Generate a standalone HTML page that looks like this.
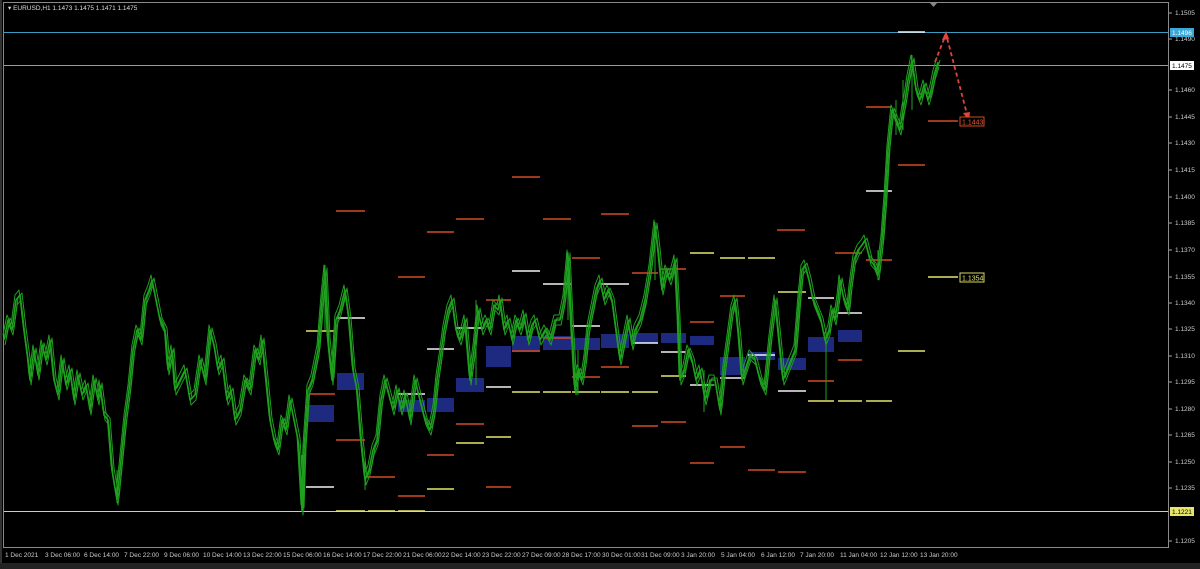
<!DOCTYPE html>
<html><head><meta charset="utf-8"><style>
html,body{margin:0;padding:0;background:#000;width:1200px;height:569px;overflow:hidden}
svg{display:block}
text{font-family:"Liberation Sans",sans-serif}
</style></head><body>
<svg width="1200" height="569" viewBox="0 0 1200 569" xmlns="http://www.w3.org/2000/svg">
<defs>
<polyline id="pl" fill="none" stroke-linejoin="round" points="
4,340 8,320 12,330 16,300 20,295 24,330 28,360 30,380 34,350 38,375 42,345 46,360 50,340 54,380 58,395 62,360 66,385 70,370 74,400 78,375 82,395 86,385 90,410 94,380 98,400 100,385 104,415 108,420 112,470 117,500 121,460 125,420 129,390 133,350 137,330 141,340 145,300 149,290 152,280 156,300 160,320 165,330 168,370 172,350 175,390 180,380 185,370 190,400 195,395 200,360 205,380 210,330 214,345 218,370 222,360 227,400 231,390 235,420 240,410 245,380 250,390 255,350 259,360 262,340 266,380 270,420 274,440 278,450 282,420 286,430 290,400 294,420 298,440 302,510 304,450 308,390 312,380 316,360 318,350 322,300 325,270 328,340 332,380 336,320 340,310 345,290 349,320 353,370 357,390 361,440 365,480 369,470 373,450 377,440 381,400 385,380 389,395 393,410 397,390 401,410 405,395 410,420 415,380 420,400 425,420 430,430 434,410 437,380 440,360 444,330 448,310 452,300 456,330 460,340 465,320 470,380 474,350 478,310 482,330 486,320 490,330 494,305 498,310 500,300 504,330 508,320 512,340 516,320 520,330 524,315 528,340 532,325 535,320 540,340 545,330 550,340 555,320 560,320 564,300 568,255 571,320 575,390 578,370 582,380 585,360 588,330 592,310 596,290 600,280 604,300 608,290 612,300 616,330 620,360 624,340 628,320 632,345 635,330 640,320 645,300 650,270 655,225 658,250 662,290 666,270 670,280 675,260 678,320 680,380 684,370 688,350 692,360 696,380 700,370 705,400 710,380 715,380 720,410 724,370 728,340 732,310 735,300 739,340 742,380 745,370 750,355 755,360 760,380 765,390 770,340 775,300 779,340 783,380 787,370 791,360 795,350 799,300 802,270 805,265 809,280 813,300 817,310 821,320 825,340 829,330 832,310 835,320 838,300 840,280 844,300 848,310 850,290 854,260 858,250 862,245 865,240 870,260 874,265 878,275 882,240 885,200 888,150 892,110 896,120 900,130 903,110 905,100 908,80 912,60 916,90 920,100 924,85 928,100 931,90 934,75 938,62"/>
</defs>
<rect width="1200" height="569" fill="#000"/>
<rect x="3.5" y="2.5" width="1165" height="545" fill="none" stroke="#8a8a8a"/>
<rect x="0" y="0" width="2" height="569" fill="#333"/>
<text x="8" y="10" font-size="6.5" fill="#ddd">▾ EURUSD,H1  1.1473 1.1475 1.1471 1.1475</text>
<line x1="4" y1="32.5" x2="1168" y2="32.5" stroke="#3a9cc0" stroke-width="1"/>
<line x1="4" y1="65.5" x2="1168" y2="65.5" stroke="#999" stroke-width="1"/>
<line x1="4" y1="511.5" x2="1168" y2="511.5" stroke="#d8d860" stroke-width="1"/>
<g fill="#1e2a80">
<rect x="307" y="405" width="27" height="17"/><rect x="337" y="373" width="27" height="17"/>
<rect x="398" y="400" width="27" height="12"/><rect x="427" y="398" width="27" height="14"/>
<rect x="456" y="378" width="28" height="14"/><rect x="486" y="346" width="25" height="21"/>
<rect x="512" y="336" width="28" height="16"/><rect x="543" y="336" width="28" height="14"/>
<rect x="572" y="338" width="28" height="12"/><rect x="601" y="334" width="28" height="14"/>
<rect x="632" y="333" width="26" height="10"/><rect x="661" y="333" width="25" height="10"/>
<rect x="690" y="336" width="24" height="9"/><rect x="720" y="357" width="25" height="18"/>
<rect x="748" y="352" width="27" height="8"/><rect x="778" y="358" width="28" height="12"/>
<rect x="808" y="337" width="26" height="15"/><rect x="838" y="330" width="24" height="12"/>
</g>
<g stroke="#d04a25" stroke-width="1.5">
<line x1="336" y1="211" x2="365" y2="211"/><line x1="398" y1="277" x2="425" y2="277"/>
<line x1="427" y1="232" x2="454" y2="232"/><line x1="456" y1="219" x2="484" y2="219"/>
<line x1="512" y1="177" x2="540" y2="177"/><line x1="543" y1="219" x2="571" y2="219"/>
<line x1="601" y1="214" x2="629" y2="214"/><line x1="661" y1="269" x2="686" y2="269"/>
<line x1="690" y1="322" x2="714" y2="322"/><line x1="777" y1="230" x2="805" y2="230"/>
<line x1="835" y1="253" x2="862" y2="253"/><line x1="866" y1="107" x2="892" y2="107"/>
<line x1="898" y1="165" x2="925" y2="165"/><line x1="928" y1="121" x2="958" y2="121"/>
<line x1="310" y1="394" x2="335" y2="394"/><line x1="336" y1="440" x2="365" y2="440"/>
<line x1="368" y1="477" x2="395" y2="477"/><line x1="398" y1="496" x2="425" y2="496"/>
<line x1="427" y1="455" x2="454" y2="455"/><line x1="456" y1="424" x2="484" y2="424"/>
<line x1="486" y1="487" x2="511" y2="487"/><line x1="512" y1="351" x2="540" y2="351"/>
<line x1="543" y1="338" x2="571" y2="338"/><line x1="572" y1="258" x2="600" y2="258"/>
<line x1="572" y1="377" x2="600" y2="377"/><line x1="632" y1="426" x2="658" y2="426"/>
<line x1="661" y1="422" x2="686" y2="422"/><line x1="690" y1="463" x2="714" y2="463"/>
<line x1="720" y1="447" x2="745" y2="447"/><line x1="748" y1="470" x2="775" y2="470"/>
<line x1="778" y1="472" x2="806" y2="472"/><line x1="808" y1="381" x2="834" y2="381"/>
<line x1="838" y1="360" x2="862" y2="360"/><line x1="486" y1="300" x2="511" y2="300"/>
<line x1="632" y1="273" x2="658" y2="273"/><line x1="720" y1="296" x2="745" y2="296"/>
<line x1="601" y1="367" x2="629" y2="367"/><line x1="866" y1="260" x2="892" y2="260"/>
</g>
<g stroke="#e6e66a" stroke-width="1.5">
<line x1="306" y1="331" x2="334" y2="331"/><line x1="690" y1="253" x2="714" y2="253"/>
<line x1="720" y1="258" x2="745" y2="258"/><line x1="748" y1="258" x2="775" y2="258"/>
<line x1="778" y1="292" x2="806" y2="292"/><line x1="336" y1="511" x2="365" y2="511"/>
<line x1="368" y1="511" x2="395" y2="511"/><line x1="398" y1="511" x2="425" y2="511"/>
<line x1="427" y1="489" x2="454" y2="489"/><line x1="456" y1="443" x2="484" y2="443"/>
<line x1="486" y1="437" x2="511" y2="437"/><line x1="512" y1="392" x2="540" y2="392"/>
<line x1="543" y1="392" x2="571" y2="392"/><line x1="572" y1="392" x2="600" y2="392"/>
<line x1="601" y1="392" x2="629" y2="392"/><line x1="632" y1="392" x2="658" y2="392"/>
<line x1="661" y1="376" x2="686" y2="376"/><line x1="808" y1="401" x2="834" y2="401"/>
<line x1="838" y1="401" x2="862" y2="401"/><line x1="866" y1="401" x2="892" y2="401"/>
<line x1="898" y1="351" x2="925" y2="351"/><line x1="928" y1="277" x2="958" y2="277"/>
</g>
<g stroke="#f2f2f2" stroke-width="1.5">
<line x1="306" y1="487" x2="334" y2="487"/><line x1="336" y1="318" x2="365" y2="318"/>
<line x1="398" y1="394" x2="425" y2="394"/><line x1="427" y1="349" x2="454" y2="349"/>
<line x1="456" y1="328" x2="484" y2="328"/><line x1="486" y1="387" x2="511" y2="387"/>
<line x1="512" y1="271" x2="540" y2="271"/><line x1="543" y1="284" x2="571" y2="284"/>
<line x1="572" y1="326" x2="600" y2="326"/><line x1="601" y1="284" x2="629" y2="284"/>
<line x1="632" y1="343" x2="658" y2="343"/><line x1="661" y1="352" x2="686" y2="352"/>
<line x1="690" y1="385" x2="714" y2="385"/><line x1="720" y1="378" x2="745" y2="378"/>
<line x1="748" y1="355" x2="775" y2="355"/><line x1="778" y1="391" x2="806" y2="391"/>
<line x1="808" y1="298" x2="834" y2="298"/><line x1="838" y1="313" x2="862" y2="313"/>
<line x1="866" y1="191" x2="892" y2="191"/><line x1="898" y1="32" x2="925" y2="32"/>
</g>
<g stroke="#1fa01f">
<use href="#pl" stroke-width="1.6"/>
<use href="#pl" stroke-width="1" transform="translate(1,5)"/>
<use href="#pl" stroke-width="1" transform="translate(-1,-5)"/>
<use href="#pl" stroke-width="1" transform="translate(2,-2)"/>
</g>
<g stroke="#1fa01f" stroke-width="1">
<line x1="302" y1="455" x2="302" y2="512"/><line x1="117" y1="470" x2="117" y2="503"/>
<line x1="325" y1="265" x2="325" y2="330"/><line x1="365" y1="460" x2="365" y2="490"/>
<line x1="655" y1="222" x2="655" y2="280"/><line x1="568" y1="252" x2="568" y2="320"/>
<line x1="826" y1="330" x2="826" y2="400"/><line x1="878" y1="250" x2="878" y2="280"/>
<line x1="903" y1="80" x2="903" y2="130"/><line x1="912" y1="55" x2="912" y2="110"/>
<line x1="896" y1="100" x2="896" y2="135"/><line x1="578" y1="350" x2="578" y2="395"/>
<line x1="476" y1="300" x2="476" y2="385"/><line x1="704" y1="370" x2="704" y2="412"/>
</g>
<polyline fill="none" stroke="#e0443a" stroke-width="1.8" stroke-dasharray="4,3" points="935,62 946,34 968,118"/>
<polygon points="946,31 942,40 949,39" fill="#e0443a"/>
<polygon points="969,121 963,113 970,112" fill="#e0443a"/>
<rect x="960" y="117" width="24" height="9" fill="#000" stroke="#d04a25"/>
<text x="962" y="124.5" font-size="7" fill="#e05a35">1.1443</text>
<rect x="960" y="273" width="24" height="9" fill="#000" stroke="#d8d860"/>
<text x="962" y="280.5" font-size="7" fill="#e6e66a">1.1354</text>
<path d="M930,3 L937,3 L933.5,7 Z" fill="#888"/>
<g font-size="6.5" fill="#ccc">
<text x="1175" y="15">1.1505</text><text x="1175" y="41">1.1490</text>
<text x="1175" y="92">1.1460</text><text x="1175" y="119">1.1445</text>
<text x="1175" y="145">1.1430</text><text x="1175" y="172">1.1415</text>
<text x="1175" y="199">1.1400</text><text x="1175" y="225">1.1385</text>
<text x="1175" y="252">1.1370</text><text x="1175" y="279">1.1355</text>
<text x="1175" y="305">1.1340</text><text x="1175" y="331">1.1325</text>
<text x="1175" y="358">1.1310</text><text x="1175" y="384">1.1295</text>
<text x="1175" y="411">1.1280</text><text x="1175" y="437">1.1265</text>
<text x="1175" y="464">1.1250</text><text x="1175" y="490">1.1235</text>
<text x="1175" y="543">1.1205</text>
</g>
<g stroke="#aaa"><line x1="1169" y1="13" x2="1172" y2="13"/><line x1="1169" y1="39" x2="1172" y2="39"/><line x1="1169" y1="90" x2="1172" y2="90"/><line x1="1169" y1="117" x2="1172" y2="117"/><line x1="1169" y1="143" x2="1172" y2="143"/><line x1="1169" y1="170" x2="1172" y2="170"/><line x1="1169" y1="197" x2="1172" y2="197"/><line x1="1169" y1="223" x2="1172" y2="223"/><line x1="1169" y1="250" x2="1172" y2="250"/><line x1="1169" y1="277" x2="1172" y2="277"/><line x1="1169" y1="303" x2="1172" y2="303"/><line x1="1169" y1="329" x2="1172" y2="329"/><line x1="1169" y1="356" x2="1172" y2="356"/><line x1="1169" y1="382" x2="1172" y2="382"/><line x1="1169" y1="409" x2="1172" y2="409"/><line x1="1169" y1="435" x2="1172" y2="435"/><line x1="1169" y1="462" x2="1172" y2="462"/><line x1="1169" y1="488" x2="1172" y2="488"/><line x1="1169" y1="541" x2="1172" y2="541"/></g>
<rect x="1170" y="28" width="24" height="9" fill="#3aa8d8"/><text x="1172" y="35" font-size="6.5" fill="#fff">1.1496</text>
<rect x="1170" y="61" width="24" height="9" fill="#fff"/><text x="1172" y="68" font-size="6.5" fill="#000">1.1475</text>
<rect x="1170" y="507" width="24" height="9" fill="#e6e66a"/><text x="1172" y="514" font-size="6.5" fill="#000">1.1221</text>
<g font-size="6.5" fill="#ccc">
<text x="5" y="557">1 Dec 2021</text><text x="45" y="557">3 Dec 06:00</text><text x="84" y="557">6 Dec 14:00</text><text x="124" y="557">7 Dec 22:00</text><text x="164" y="557">9 Dec 06:00</text><text x="203" y="557">10 Dec 14:00</text><text x="243" y="557">13 Dec 22:00</text><text x="283" y="557">15 Dec 06:00</text><text x="323" y="557">16 Dec 14:00</text><text x="363" y="557">17 Dec 22:00</text><text x="403" y="557">21 Dec 06:00</text><text x="442" y="557">22 Dec 14:00</text><text x="482" y="557">23 Dec 22:00</text><text x="522" y="557">27 Dec 09:00</text><text x="562" y="557">28 Dec 17:00</text><text x="602" y="557">30 Dec 01:00</text><text x="641" y="557">31 Dec 09:00</text><text x="681" y="557">3 Jan 20:00</text><text x="721" y="557">5 Jan 04:00</text><text x="761" y="557">6 Jan 12:00</text><text x="800" y="557">7 Jan 20:00</text><text x="840" y="557">11 Jan 04:00</text><text x="880" y="557">12 Jan 12:00</text><text x="920" y="557">13 Jan 20:00</text>
</g>
<rect x="0" y="563" width="1200" height="6" fill="#222"/>
</svg>
</body></html>
